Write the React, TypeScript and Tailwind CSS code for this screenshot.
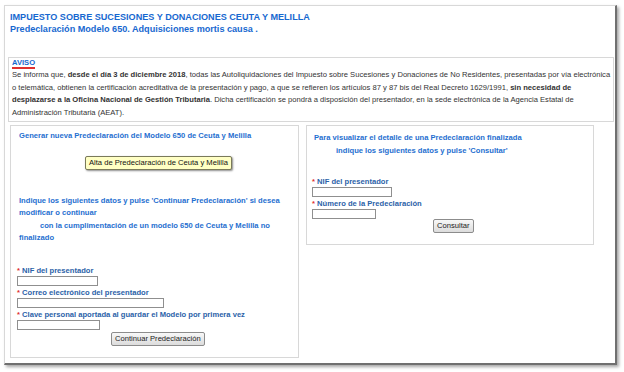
const Req = ({ children }: { children: React.ReactNode }) => (
  <div className="leading-[11px] h-[11px] font-bold text-[7.6px] text-[#2b62a8] whitespace-nowrap">
    <span className="text-[#e03030]">* </span>
    {children}
  </div>
);

const Field = ({ w }: { w: string }) => (
  <div className={`h-[10px] ${w} border border-[#8f8f8f] bg-white`} />
);

const GrayButton = ({ label }: { label: string }) => (
  <button className="h-[14px] px-[3px] rounded-[2px] border border-[#8c8c8c] bg-gradient-to-b from-[#f8f8f8] to-[#dcdcdc] text-[7.6px] leading-[12px] text-[#222]">
    {label}
  </button>
);

export default function App() {
  return (
    <div className="w-[624px] h-[372px] bg-white pt-[5px] pl-[4px] font-['Liberation_Sans',Arial,sans-serif]">
      <div className="w-[613px] h-[360px] bg-white border-t border-l border-[#d8d8d8] border-r-2 border-b-2 border-r-[#707070] border-b-[#707070] shadow-[2px_2px_3px_rgba(0,0,0,0.35)]">
        {/* cabecera */}
        <div className="pl-[5px] pt-[5px] text-[9.1px] leading-[12px] font-bold text-[#1768d0]">
          <div>IMPUESTO SOBRE SUCESIONES Y DONACIONES CEUTA Y MELILLA</div>
          <div>Predeclaración Modelo 650. Adquisiciones mortis causa .</div>
        </div>

        {/* aviso */}
        <div className="mt-[22px] ml-[3px] w-[606px] border border-[#d8d8d8] pl-[3px] pb-[1px] text-[7.6px] text-[#333]">
          <div className="h-[11px] pt-[1px] flex">
            <span className="leading-[8px] h-[10px] font-bold text-[#1768d0] border-b-2 border-[#e03030]">AVISO</span>
          </div>
          <div className="leading-[12.7px] whitespace-nowrap">
            Se informa que, <b>desde el día 3 de diciembre 2018</b>, todas las Autoliquidaciones del Impuesto sobre Sucesiones y Donaciones de No Residentes, presentadas por vía electrónica
            <br />
            o telemática, obtienen la certificación acreditativa de la presentación y pago, a que se refieren los artículos 87 y 87 bis del Real Decreto 1629/1991, <b>sin necesidad de</b>
            <br />
            <b>desplazarse a la Oficina Nacional de Gestión Tributaria</b>. Dicha certificación se pondrá a disposición del presentador, en la sede electrónica de la Agencia Estatal de
            <br />
            Administración Tributaria (AEAT).
          </div>
        </div>

        <div className="mt-[3px] ml-[5px] flex items-start gap-[7px]">
          {/* nueva / continuar */}
          <div className="w-[289px] h-[233px] border border-[#d8d8d8] pl-[6px] pt-[4px]">
            <div className="pl-[2px] text-[7.6px] leading-[12px] font-bold text-[#1f6fd0] whitespace-nowrap">
              Generar nueva Predeclaración del Modelo 650 de Ceuta y Melilla
            </div>
            <div className="mt-[14px] pl-[68px] flex">
              <button className="h-[14px] px-[3px] rounded-[2px] border border-[#7a7a5a] bg-[#ffffc4] shadow-[1px_1px_2px_rgba(0,0,0,0.45)] text-[7.6px] leading-[12px] text-[#111]">
                Alta de Predeclaración de Ceuta y Melilla
              </button>
            </div>
            <div className="mt-[25px] pl-[2px] text-[7.6px] leading-[12.4px] font-bold text-[#1f6fd0] whitespace-nowrap">
              Indique los siguientes datos y pulse 'Continuar Predeclaración' si desea
              <br />
              modificar o continuar
              <br />
              <span className="pl-[21px]">con la cumplimentación de un modelo 650 de Ceuta y Melilla no</span>
              <br />
              finalizado
            </div>
            <div className="mt-[21px]">
              <Req>NIF del presentador</Req>
              <Field w="w-[81px]" />
              <div className="mt-[1px]">
                <Req>Correo electrónico del presentador</Req>
              </div>
              <Field w="w-[147px]" />
              <div className="mt-[1px]">
                <Req>Clave personal aportada al guardar el Modelo por primera vez</Req>
              </div>
              <Field w="w-[83px]" />
              <div className="mt-[2px] pl-[94px] flex">
                <GrayButton label="Continuar Predeclaración" />
              </div>
            </div>
          </div>

          {/* consultar */}
          <div className="w-[288px] h-[120px] border border-[#d8d8d8] pl-[5px] pt-[5px]">
            <div className="pl-[2px] text-[7.6px] leading-[13px] font-bold text-[#1f6fd0] whitespace-nowrap">
              Para visualizar el detalle de una Predeclaración finalizada
              <br />
              <span className="pl-[22px]">indique los siguientes datos y pulse 'Consultar'</span>
            </div>
            <div className="mt-[19px]">
              <Req>NIF del presentador</Req>
              <Field w="w-[80px]" />
              <div className="mt-[1px]">
                <Req>Número de la Predeclaración</Req>
              </div>
              <Field w="w-[64px]" />
              <div className="pl-[121px] flex">
                <GrayButton label="Consultar" />
              </div>
            </div>
          </div>
        </div>
      </div>
    </div>
  );
}
